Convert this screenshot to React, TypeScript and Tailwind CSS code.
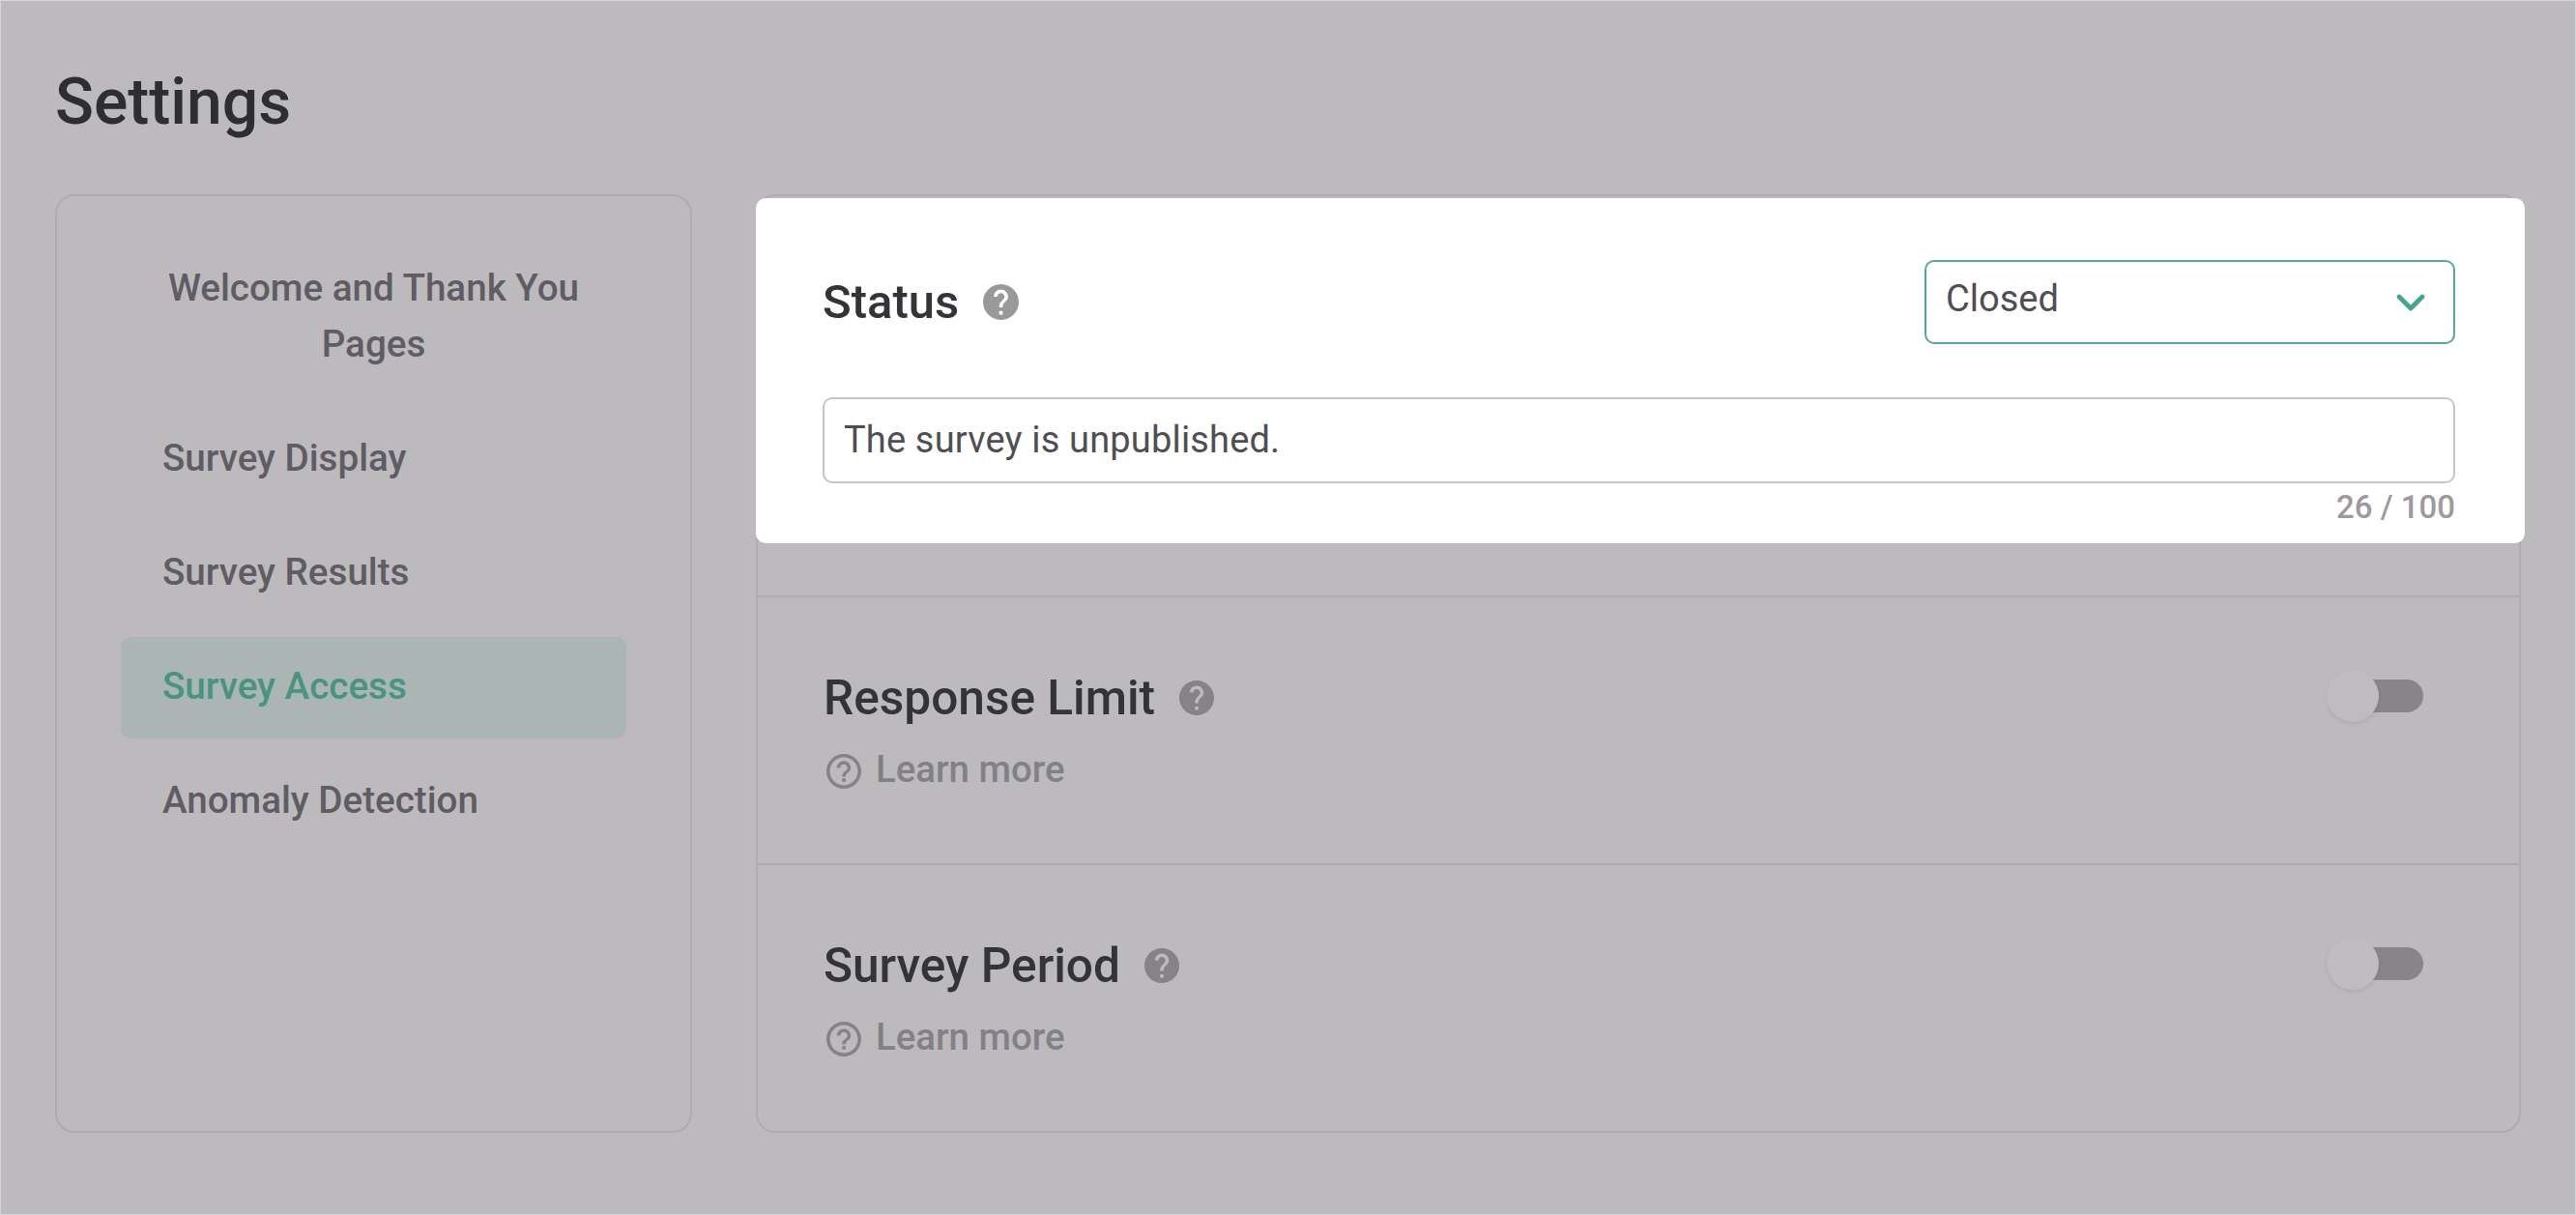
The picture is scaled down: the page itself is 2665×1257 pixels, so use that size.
import { ChevronDown } from "lucide-react";

const helpFilled =
  "M12 2C6.48 2 2 6.48 2 12s4.48 10 10 10 10-4.48 10-10S17.52 2 12 2zm1 17h-2v-2h2v2zm2.07-7.75l-.9.92C13.45 12.9 13 13.5 13 15h-2v-.5c0-1.1.45-2.1 1.17-2.83l1.24-1.26c.37-.36.59-.86.59-1.41 0-1.1-.9-2-2-2s-2 .9-2 2H8c0-2.21 1.79-4 4-4s4 1.79 4 4c0 .88-.36 1.68-.93 2.25z";
const helpOutline =
  "M11 18h2v-2h-2v2zm1-16C6.48 2 2 6.48 2 12s4.48 10 10 10 10-4.48 10-10S17.52 2 12 2zm0 18c-4.41 0-8-3.59-8-8s3.59-8 8-8 8 3.59 8 8-3.59 8-8 8zm0-14c-2.21 0-4 1.79-4 4h2c0-1.1.9-2 2-2s2 .9 2 2c0 2-3 1.75-3 5h2c0-2.25 3-2.5 3-5 0-2.21-1.79-4-4-4z";

const HelpIcon = ({ className }: { className: string }) => (
  <svg viewBox="2 2 20 20" className={className} fill="currentColor">
    <path d={helpFilled} />
  </svg>
);

const Toggle = () => (
  <div className="relative w-[102px] h-[34px] mr-[99px]">
    <div className="ml-[20px] h-[34px] rounded-full bg-[#878589]" />
    <div className="absolute left-[2px] top-[-10px] w-[54px] h-[54px] rounded-full bg-[#bebcbf] shadow-[0_2px_4px_rgba(0,0,0,0.08)]" />
  </div>
);

const OptionSection = ({ title, last }: { title: string; last?: boolean }) => (
  <div
    className={`flex justify-between items-start pl-[68px] pt-[76px] ${
      last ? "flex-1" : "h-[277px] border-b-2 border-[#aeacb0]"
    }`}
  >
    <div>
      <div className="flex items-center gap-[25px]">
        <h2 className="text-[49.6px] leading-[56px] font-medium text-[#343338]">{title}</h2>
        <HelpIcon className="w-[36px] h-[36px] text-[#858387]" />
      </div>
      <div className="flex items-center gap-[15px] mt-[26px] h-[40px] pl-[3px]">
        <svg viewBox="2 2 20 20" className="w-[36px] h-[36px] mt-[4px] text-[#858387]" fill="currentColor">
          <path d={helpOutline} />
        </svg>
        <span className="text-[38.4px] leading-[40px] font-medium text-[#838186]">Learn more</span>
      </div>
    </div>
    <div className="mt-[9px]">
      <Toggle />
    </div>
  </div>
);

const menu = ["Survey Display", "Survey Results", "Survey Access", "Anomaly Detection"];

export default function App() {
  return (
    <div className="h-[1257px] border border-[#d6d5d7] bg-[#bcbabd] pl-[56px] pr-[56px] pt-[67px] font-['Roboto',sans-serif] overflow-hidden">
      <h1 className="text-[66px] leading-[76px] font-medium text-[#2e2d32] mb-[57px]">Settings</h1>
      <div className="flex gap-[66px] h-[971px]">
        <aside className="w-[659px] border-2 border-[#aeacb0] rounded-[20px] px-[66px] pt-[44px]">
          <div className="flex flex-col gap-[12.5px]">
            <div className="pt-[22px] pb-[26px] px-[30px] text-center text-[38.6px] leading-[57.6px] font-medium text-[#5f5d63]">
              Welcome and Thank You Pages
            </div>
            {menu.map((item) => (
              <div
                key={item}
                className={`pt-[22px] pb-[26px] pl-[43px] rounded-[10px] text-[38.6px] leading-[57.6px] font-medium ${
                  item === "Survey Access" ? "bg-[#aab5b4] text-[#47947f]" : "text-[#5f5d63]"
                }`}
              >
                {item}
              </div>
            ))}
          </div>
        </aside>
        <main className="flex-1 flex flex-col border-2 border-[#aeacb0] rounded-[20px]">
          <div className="relative h-[415px] shrink-0 border-b-2 border-[#aeacb0]">
            {/* spotlight card sits above the dimmed panel */}
            <div className="absolute left-[-2px] right-[-6px] top-[2px] h-[357px] bg-white rounded-[10px] pl-[69px] pr-[72px] pt-[64px]">
              <div className="flex items-center justify-between">
                <div className="flex items-center gap-[25px]">
                  <h2 className="text-[49px] leading-[56px] font-medium text-[#343338]">Status</h2>
                  <HelpIcon className="w-[37px] h-[37px] text-[#9a989b]" />
                </div>
                <div className="w-[549px] h-[87px] border-2 border-[#54a89a] rounded-[10px] pl-[20px] pr-[20px] pb-[6px] flex items-center justify-between">
                  <span className="text-[38px] text-[#4f4e53]">Closed</span>
                  <ChevronDown className="w-[48px] h-[48px] mt-[6px] text-[#45a592]" strokeWidth={2.4} />
                </div>
              </div>
              <div className="mt-[55px] h-[89px] border-2 border-[#c6c5c8] rounded-[10px] pl-[20px] flex items-center text-[38px] text-[#4f4e53] tracking-[0.17px]">
                The survey is unpublished.
              </div>
              <div className="mt-[6px] text-right text-[33px] leading-[38px] font-medium text-[#9c9a9e]">26 / 100</div>
            </div>
          </div>
          <OptionSection title="Response Limit" />
          <OptionSection title="Survey Period" last />
        </main>
      </div>
    </div>
  );
}
